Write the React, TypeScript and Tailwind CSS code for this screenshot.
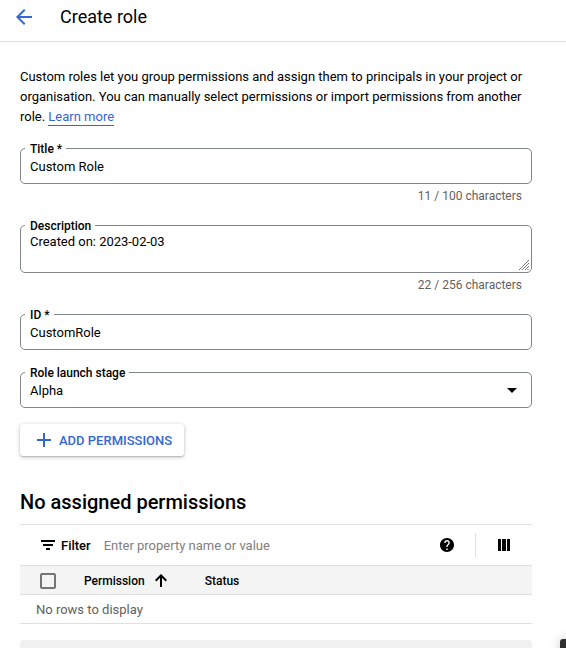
import type { ReactNode } from "react";

function Field({ label, className, children }: { label: string; className: string; children: ReactNode }) {
  return (
    <div className={`relative flex w-[512px] rounded-[5px] border border-[#80868b] px-[9px] ${className}`}>
      <span className="absolute -top-2 left-1 bg-white pr-1 pl-[5px] text-[12px] leading-4 font-medium tracking-[-0.01px] whitespace-nowrap">
        {label}
      </span>
      {children}
    </div>
  );
}

export default function App() {
  return (
    <div className="relative h-[648px] w-[566px] overflow-hidden bg-white font-['Roboto',sans-serif] text-[13px] leading-5 text-black">
      <header className="flex h-[42px] items-start border-b border-[#e0e0e0] pl-3">
        <svg className="mt-[5px] h-6 w-6" viewBox="0 0 24 24" fill="#3367d6">
          <path d="M20 11H7.83l5.59-5.59L12 4l-8 8 8 8 1.41-1.41L7.83 13H20v-2z" />
        </svg>
        <h1 className="mt-[5px] ml-6 text-[18px] leading-6">Create role</h1>
      </header>

      <main className="px-5 pt-[25px]">
        <p className="w-[512px] text-[13px] leading-5 tracking-[-0.008px]">
          Custom roles let you group permissions and assign them to principals in your project or
          organisation. You can manually select permissions or import permissions from another role.{" "}
          <a className="border-b border-[#3367d6] pb-px text-[#3367d6]">Learn more</a>
        </p>

        <Field label="Title *" className="mt-[21px] h-9 items-center pt-[2px]">
          <span>Custom Role</span>
        </Field>
        <div className="mt-1 w-[502px] text-right text-[12px] leading-4 text-[#616161]">11 / 100 characters</div>

        <Field label="Description" className="mt-[21px] h-12 items-start pt-[6px]">
          <span className="tracking-[-0.02px]">Created on: 2023-02-03</span>
          <svg className="absolute right-[2px] bottom-[2px] h-[10px] w-[10px]" viewBox="0 0 10 10" stroke="#777" strokeWidth="1" fill="none">
            <path d="M0 10L10 0M3 10l7-7M6 10l4-4M8.500 10l1.500-1.500" />
          </svg>
        </Field>
        <div className="mt-1 w-[502px] text-right text-[12px] leading-4 text-[#616161]">22 / 256 characters</div>

        <Field label="ID *" className="mt-[21px] h-9 items-center pt-[2px]">
          <span>CustomRole</span>
        </Field>
        <Field label="Role launch stage" className="mt-[22px] h-9 items-center justify-between pt-[2px]">
          <span>Alpha</span>
          <svg className="mr-[5px] mb-[2px] h-[5px] w-[10px]" viewBox="0 0 10 5">
            <path d="M0 0h10L5 5z" />
          </svg>
        </Field>

        <button className="mt-4 flex h-8 w-[164px] items-center rounded-[3px] bg-white pl-[17px] font-medium text-[#3367d6] shadow-[0_1px_4px_rgba(0,0,0,0.24),0_1px_1px_rgba(0,0,0,0.16)]">
          <svg className="h-[14px] w-[14px]" viewBox="0 0 14 14" fill="#3367d6">
            <path d="M6 0h2v6h6v2H8v6H6V8H0V6h6z" />
          </svg>
          <span className="ml-2 pt-[2px] whitespace-nowrap">ADD PERMISSIONS</span>
        </button>

        <h2 className="mt-[34px] text-[20px] leading-6 font-medium">No assigned permissions</h2>

        <section className="mt-[10px] w-[512px] border-t border-[#e0e0e0]">
          <div className="flex h-[41px] items-center border-b border-[#e0e0e0] pl-[21px]">
            <svg className="h-[10px] w-[14px]" viewBox="0 0 14 10">
              <path d="M0 0h14v2H0zM2 4h10v2H2zM5 8h4v2H5z" />
            </svg>
            <span className="ml-[6px] pt-[2px] font-medium">Filter</span>
            <span className="ml-[13px] flex-1 pt-[2px] text-[#808080]">Enter property name or value</span>
            <svg className="h-[14px] w-[14px]" viewBox="2 2 20 20">
              <path d="M12 2C6.48 2 2 6.48 2 12s4.48 10 10 10 10-4.48 10-10S17.52 2 12 2zm1 17h-2v-2h2v2zm2.07-7.75l-.9.92C13.45 12.9 13 13.5 13 15h-2v-.5c0-1.1.45-2.1 1.17-2.83l1.24-1.26c.37-.36.59-.86.59-1.41 0-1.1-.9-2-2-2s-2 .9-2 2H8c0-2.21 1.79-4 4-4s4 1.79 4 4c0 .88-.36 1.68-.93 2.25z" />
            </svg>
            <div className="ml-[21px] h-6 w-px bg-[#e0e0e0]" />
            <svg className="mr-[22px] ml-[22px] h-3 w-3" viewBox="0 0 12 12">
              <path d="M0 0h3v12H0zM4 0h4v12H4zM9 0h3v12H9z" />
            </svg>
          </div>
          <div className="flex h-[29px] items-center border-b border-[#e0e0e0] bg-[#f4f4f4] pl-5 text-[12px] font-medium">
            <div className="mt-px h-4 w-4 rounded-[2px] border-2 border-[#757575]" />
            <span className="ml-7 pt-[2px]">Permission</span>
            <svg className="ml-[10px] h-[13px] w-3" viewBox="0 0 12 13" fill="none" stroke="black" strokeWidth="2">
              <path d="M6 13V1.5M.7 6.7L6 1.4l5.3 5.3" />
            </svg>
            <span className="ml-[38px] pt-[2px]">Status</span>
          </div>
          <div className="flex h-[29px] items-center border-b border-[#e0e0e0] pt-[2px] pl-4 text-[#616161]">No rows to display</div>
        </section>

        <div className="mt-4 h-8 w-[512px] rounded-[4px] bg-[#f1f1f1]" />
      </main>

      <div className="absolute top-[639px] left-[560px] h-10 w-10 rounded-[3px] bg-[#303030] shadow-[0_0_12px_rgba(0,0,0,0.2)]" />
    </div>
  );
}
